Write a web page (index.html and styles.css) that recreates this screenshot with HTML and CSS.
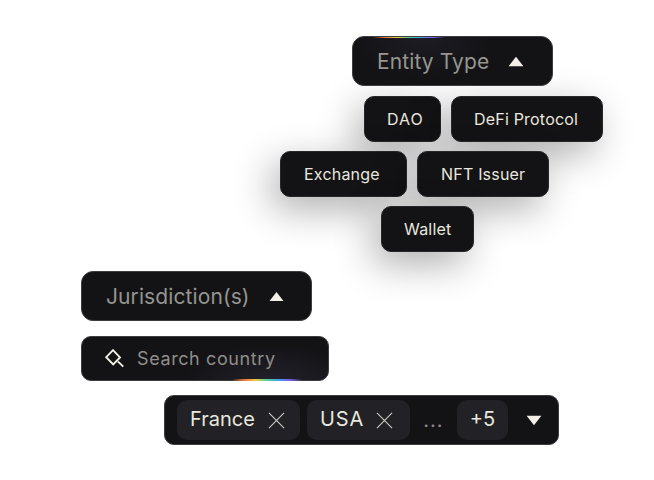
FILE: index.html
```html
<!DOCTYPE html>
<html lang="en">
<head>
    <meta charset="UTF-8">
    <meta name="viewport" content="width=device-width, initial-scale=1.0">
    <title>Filters</title>
    <link rel="stylesheet" href="styles.css">
</head>
<body>
    <div class="dropdown entity-head">
        <span class="rainbow rainbow-top"></span>
        <span class="dropdown-label">Entity Type</span>
        <svg class="caret" width="16" height="11" viewBox="0 0 16 11"><path d="M8 .8 15.4 10.2H.6Z"/></svg>
    </div>

    <div class="chip-row row-one">
        <div class="chip chip-dao">DAO</div>
        <div class="chip chip-defi">DeFi Protocol</div>
    </div>
    <div class="chip-row row-two">
        <div class="chip chip-exchange">Exchange</div>
        <div class="chip chip-nft">NFT Issuer</div>
    </div>
    <div class="chip-row row-three">
        <div class="chip chip-wallet">Wallet</div>
    </div>

    <div class="dropdown jurisdiction-head">
        <span class="dropdown-label">Jurisdiction(s)</span>
        <svg class="caret" width="15" height="11" viewBox="0 0 16 11"><path d="M8 .8 15.4 10.2H.6Z"/></svg>
    </div>

    <div class="search">
        <svg class="search-icon" width="20" height="20" viewBox="0 0 20 20">
            <path d="M9 1.2 16 8.4 9.2 15.4 2.2 8.2Z"/>
            <path d="M13.8 12.4 19.3 17.6"/>
        </svg>
        <span class="search-text">Search country</span>
        <span class="rainbow rainbow-bottom"></span>
    </div>

    <div class="tags">
        <div class="tag tag-france"><span class="tag-name">France</span>
            <svg class="tag-x" width="17" height="17" viewBox="0 0 18 18"><path d="M1 1 17 17M17 1 1 17"/></svg>
        </div>
        <div class="tag tag-usa"><span class="tag-name">USA</span>
            <svg class="tag-x" width="17" height="17" viewBox="0 0 18 18"><path d="M1 1 17 17M17 1 1 17"/></svg>
        </div>
        <span class="dots">...</span>
        <div class="tag tag-more">+5</div>
        <svg class="caret caret-down" width="16" height="11" viewBox="0 0 16 11"><path d="M8 10.2 15.4 .8H.6Z"/></svg>
    </div>
</body>
</html>
```

FILE: styles.css
```css
html, body {
    margin: 0;
    height: 480px;
    overflow: hidden;
}
body {
    background-color: #fff;
    font-family: Inter, "Liberation Sans", sans-serif;
    color: #e9e7df;
    padding-top: 36px;
    box-sizing: border-box;
}
.dropdown, .chip, .search, .tags {
    background-color: #131316;
    border: 1px solid #3d3d41;
    box-sizing: border-box;
}
.dropdown {
    position: relative;
    display: flex;
    align-items: center;
    height: 50px;
    border-radius: 12px;
    overflow: hidden;
}
.dropdown-label {
    color: #96958f;
    font-size: 21px;
    letter-spacing: 0.1px;
}
.caret {
    fill: #f2f0e6;
}
.entity-head {
    width: 201px;
    margin-left: 352px;
    padding-left: 24px;
    gap: 19px;
    background-image: radial-gradient(ellipse 70px 40px at 70px 0, #1e1c24, transparent);
}
.rainbow {
    position: absolute;
    height: 2px;
    background-image: linear-gradient(90deg, transparent, #e8743a, #f0c63c, #4fd0a0, #4a9cf0, #7a5ce8, transparent);
}
.rainbow-top {
    left: 20px;
    top: -1px;
    width: 72px;
}
.rainbow-bottom {
    left: 150px;
    bottom: -1px;
    width: 70px;
}
.chip-row {
    display: flex;
    gap: 10px;
}
.chip {
    display: flex;
    align-items: center;
    height: 46px;
    padding-left: 22px;
    border-radius: 10px;
    font-size: 16px;
    letter-spacing: 0.2px;
    border-color: #27272a;
    box-shadow: -8px 12px 38px rgba(0, 0, 0, 0.32);
}
.row-one {
    margin-top: 10px;
    margin-left: 364px;
}
.row-two {
    margin-top: 9px;
    margin-left: 280px;
}
.row-two .chip {
    padding-left: 23px;
}
.row-three {
    margin-top: 9px;
    margin-left: 381px;
}
.chip-dao { width: 77px; letter-spacing: 1px; }
.chip-defi { width: 152px; }
.chip-exchange { width: 127px; }
.chip-nft { width: 132px; }
.chip-wallet { width: 93px; }
.jurisdiction-head {
    width: 231px;
    margin-top: 19px;
    margin-left: 81px;
    padding-left: 24px;
    gap: 19px;
}
.search {
    position: relative;
    display: flex;
    align-items: center;
    width: 248px;
    height: 45px;
    margin-top: 15px;
    margin-left: 81px;
    padding-left: 22px;
    gap: 13px;
    border-radius: 10px;
    background-image: radial-gradient(ellipse 90px 36px at 190px 44px, #22212a, transparent);
}
.search-icon {
    fill: none;
    stroke: #f2f0e6;
    stroke-width: 1.9;
}
.search-text {
    color: #8f8e89;
    font-size: 18px;
    letter-spacing: 0.6px;
}
.tags {
    display: flex;
    align-items: center;
    width: 395px;
    height: 50px;
    margin-top: 14px;
    margin-left: 164px;
    padding-left: 12px;
    border-radius: 10px;
}
.tag {
    display: flex;
    align-items: center;
    justify-content: center;
    height: 40px;
    border-radius: 10px;
    background-color: #222226;
    font-size: 20px;
}
.tag-france {
    width: 123px;
    justify-content: flex-start;
    padding-left: 13px;
    box-sizing: border-box;
    gap: 13px;
}
.tag-usa {
    width: 103px;
    justify-content: flex-start;
    padding-left: 13px;
    box-sizing: border-box;
    margin-left: 7px;
    gap: 12px;
}
.tag-usa .tag-name {
    letter-spacing: 0.9px;
}
.tag-name {
    margin-bottom: 2px;
}
.tag-more {
    width: 51px;
    padding-bottom: 2px;
    box-sizing: border-box;
}
.tag-x {
    fill: none;
    stroke: #cfcdc6;
    stroke-width: 1.1;
}
.dots {
    width: 47px;
    text-align: center;
    color: #8f8e89;
    font-size: 20px;
    letter-spacing: 1px;
}
.caret-down {
    margin-left: 18px;
}
```
